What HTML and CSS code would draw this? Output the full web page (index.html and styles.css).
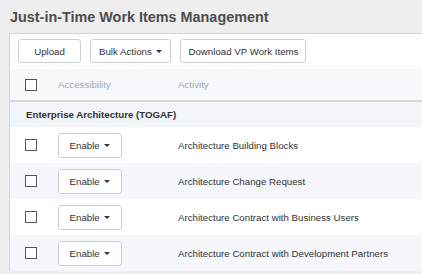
FILE: index.html
```html
<!DOCTYPE html>
<html lang="en">

<head>
    <meta charset="UTF-8">
    <title>Just-in-Time Work Items Management</title>
    <link rel="stylesheet" href="styles.css">
</head>

<body>
    <h1 class="title">Just-in-Time Work Items Management</h1>

    <div class="panel">
        <div class="toolbar">
            <button class="btn btn-upload">Upload</button>
            <button class="btn">Bulk Actions <span class="caret"></span></button>
            <button class="btn btn-download">Download VP Work Items</button>
        </div>

        <table class="grid">
            <thead>
                <tr>
                    <th class="col-check"><span class="checkbox"></span></th>
                    <th class="col-access">Accessibility</th>
                    <th>Activity</th>
                </tr>
            </thead>
            <tbody>
                <tr class="group">
                    <td colspan="3">Enterprise Architecture (TOGAF)</td>
                </tr>
                <tr>
                    <td class="col-check"><span class="checkbox"></span></td>
                    <td class="col-access"><button class="btn btn-sm">Enable <span class="caret"></span></button></td>
                    <td>Architecture Building Blocks</td>
                </tr>
                <tr class="alt">
                    <td class="col-check"><span class="checkbox"></span></td>
                    <td class="col-access"><button class="btn btn-sm">Enable <span class="caret"></span></button></td>
                    <td>Architecture Change Request</td>
                </tr>
                <tr>
                    <td class="col-check"><span class="checkbox"></span></td>
                    <td class="col-access"><button class="btn btn-sm">Enable <span class="caret"></span></button></td>
                    <td>Architecture Contract with Business Users</td>
                </tr>
                <tr class="alt">
                    <td class="col-check"><span class="checkbox"></span></td>
                    <td class="col-access"><button class="btn btn-sm">Enable <span class="caret"></span></button></td>
                    <td>Architecture Contract with Development Partners</td>
                </tr>
            </tbody>
        </table>
    </div>
</body>

</html>
```

FILE: styles.css
```css
body {
    font-family: "Liberation Sans", Arial, sans-serif;
    font-size: 9.7px;
    color: #333;
    margin: 0;
    background-color: #eeeeee;
}

.title {
    margin: 0;
    padding: 9px 0 0 10px;
    height: 24px;
    font-size: 14.4px;
    font-weight: bold;
    color: #4d4d4d;
}

.panel {
    margin-left: 9px;
    background-color: white;
    border-top: 1px solid #d6d6d6;
    border-left: 1px solid #d6d6d6;
}

.toolbar {
    display: flex;
    gap: 9px;
    padding: 5px 8px 6px;
}

.btn {
    font-family: inherit;
    font-size: 9.7px;
    color: #333;
    height: 24px;
    padding: 0 8px;
    background-color: white;
    border: 1px solid #cfcfcf;
    border-radius: 3px;
}

.btn-upload {
    width: 63px;
}

.btn-download {
    padding: 0 7px;
}

.btn-sm {
    height: 25px;
    width: 64px;
    padding: 0;
}

.caret {
    display: inline-block;
    width: 0;
    height: 0;
    margin-left: 2px;
    vertical-align: middle;
    border-top: 3.5px solid #333;
    border-left: 3.5px solid transparent;
    border-right: 3.5px solid transparent;
}

.grid {
    width: 100%;
    border-collapse: collapse;
}

.grid th {
    height: 31px;
    text-align: left;
    font-weight: normal;
    color: #a8a8a8;
    background-color: #f7f8fa;
    border-bottom: 2px solid #d8d8d8;
    padding: 0;
}

.grid td {
    height: 36px;
    padding: 0;
}

.grid .group td {
    height: 25px;
    font-weight: bold;
    padding-left: 16px;
    background-color: #f2f5fa;
}

.grid .alt td {
    background-color: #f5f7fb;
}

.grid .col-check {
    width: 33px;
    padding-left: 15px;
}

.grid .col-access {
    width: 120px;
}

.checkbox {
    display: block;
    width: 10px;
    height: 10px;
    border: 1px solid #555;
    background-color: white;
}
```
